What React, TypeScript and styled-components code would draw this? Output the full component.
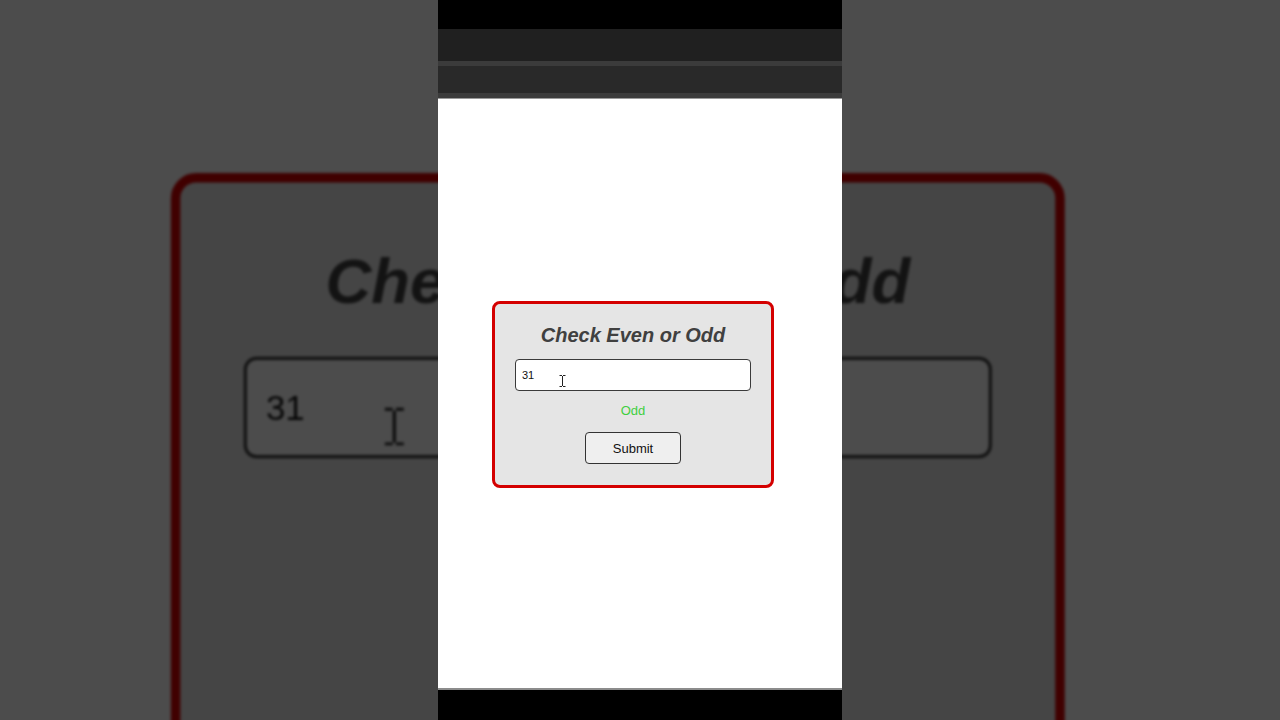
import { useState } from "react";
import styled, { createGlobalStyle } from "styled-components";

const GlobalStyle = createGlobalStyle`
  * {
    box-sizing: border-box;
  }
  html,
  body {
    margin: 0;
    padding: 0;
    background: #4d4d4d;
  }
  body {
    font-family: "Liberation Sans", Arial, sans-serif;
  }
`;

const checkNumber = (value: string) => {
  const n = Number(value);
  if (value.trim() === "" || Number.isNaN(n)) return "";
  return n % 2 === 0 ? "Even" : "Odd";
};

interface ScreenProps {
  value: string;
  result: string;
  onChange?: (v: string) => void;
  onSubmit?: () => void;
}

const Screen = ({ value, result, onChange, onSubmit }: ScreenProps) => {
  return (
    <StColumn>
      <StTopBlack />
      <StTabBar />
      <StAddressBar />
      <StPage>
        <StCard
          onSubmit={(e) => {
            e.preventDefault();
            onSubmit?.();
          }}
        >
          <StTitle>Check Even or Odd</StTitle>
          <StInputWrap>
            <StInput
              type="text"
              value={value}
              onChange={(e) => onChange?.(e.target.value)}
            />
            <StCursor width="7" height="12" viewBox="0 0 7 12">
              <path
                d="M0.5 0.5h2.5M4 0.5h2.5M3.5 1v10M0.5 11.5h2.5M4 11.5h2.5"
                stroke="#222"
                strokeWidth="1"
                fill="none"
              />
            </StCursor>
          </StInputWrap>
          <StResult>{result}</StResult>
          <StButton type="submit">Submit</StButton>
        </StCard>
      </StPage>
      <StBottomBlack />
    </StColumn>
  );
};

const App = () => {
  const [value, setValue] = useState("31");
  const [result, setResult] = useState(checkNumber("31"));

  return (
    <>
      <GlobalStyle />
      <StStage>
        <StBackdrop aria-hidden>
          <Screen value={value} result={result} />
        </StBackdrop>
        <StForeground>
          <Screen
            value={value}
            result={result}
            onChange={setValue}
            onSubmit={() => setResult(checkNumber(value))}
          />
        </StForeground>
      </StStage>
    </>
  );
};

export default App;

const StStage = styled.div`
  position: relative;
  width: 1280px;
  height: 720px;
  overflow: hidden;

  background: #4d4d4d;
`;
const StBackdrop = styled.div`
  position: absolute;
  inset: 0;
  display: flex;
  justify-content: center;

  transform: scale(3.17);
  transform-origin: 640px 360px;
  filter: brightness(0.3) blur(0.5px);
  pointer-events: none;
`;
const StForeground = styled.div`
  position: relative;
  z-index: 1;
  display: flex;
  justify-content: center;
  height: 100%;
`;
const StColumn = styled.div`
  display: flex;
  flex-direction: column;
  width: 404px;
  height: 720px;
`;
const StTopBlack = styled.div`
  height: 29px;
  background: #000;
`;
const StTabBar = styled.div`
  height: 37px;

  background: #202020;
  border-bottom: 5px solid #3b3b3b;
`;
const StAddressBar = styled.div`
  height: 33px;

  background: linear-gradient(
    to bottom,
    #292929 27px,
    #3c3c3c 27px,
    #3c3c3c 32px,
    #999 32px
  );
`;
const StPage = styled.div`
  flex: 1;
  display: flex;
  justify-content: center;
  align-items: center;
  padding: 2px 14px 0 0;

  background: #fff;
  border-bottom: 2px solid #8c8c8c;
`;
const StBottomBlack = styled.div`
  height: 30px;
  background: #000;
`;
const StCard = styled.form`
  display: flex;
  flex-direction: column;
  align-items: center;
  width: 282px;
  padding: 20px 20px 21px;

  background: #e5e5e5;
  border: 3px solid #d40000;
  border-radius: 8px;
`;
const StTitle = styled.h2`
  margin: 0 0 12px;

  color: #404040;
  font-size: 20px;
  line-height: 23px;
  font-style: italic;
  font-weight: 700;
`;
const StInputWrap = styled.div`
  position: relative;
  width: 100%;
`;
const StInput = styled.input`
  display: block;
  width: 100%;
  height: 32px;
  padding: 0 6px;

  color: #111;
  font-family: "Liberation Sans", Arial, sans-serif;
  font-size: 11px;
  background: #fff;
  border: 1px solid #3a3a3a;
  border-radius: 4px;
  outline: none;
`;
const StCursor = styled.svg`
  position: absolute;
  left: 44px;
  top: 16px;
  pointer-events: none;
`;
const StResult = styled.p`
  margin: 12px 0 14px;
  min-height: 15px;

  color: #3fcf3f;
  font-size: 13px;
  line-height: 15px;
`;
const StButton = styled.button`
  width: 96px;
  height: 32px;
  padding: 0;

  color: #111;
  font-family: "Liberation Sans", Arial, sans-serif;
  font-size: 13px;
  background: #efefef;
  border: 1px solid #333;
  border-radius: 4px;
  cursor: pointer;
`;
